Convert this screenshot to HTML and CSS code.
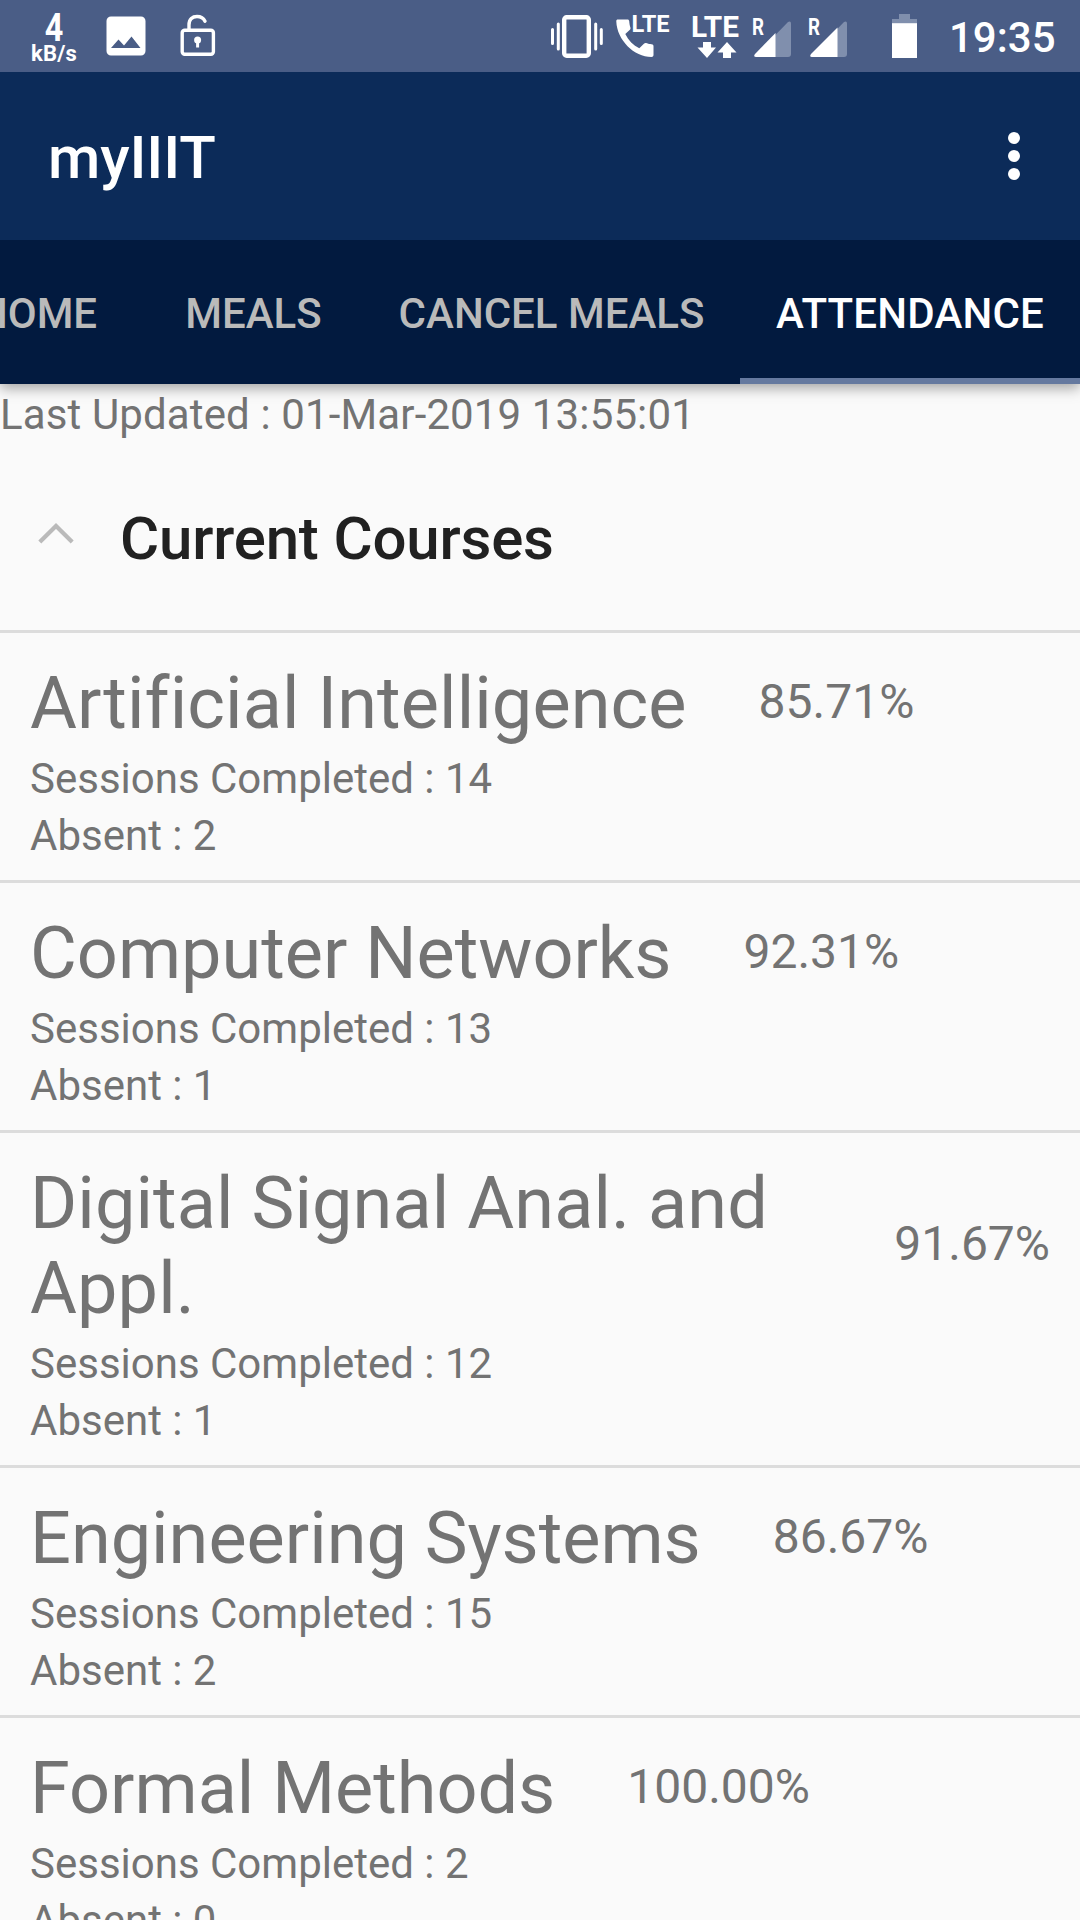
FILE: index.html
```html
<!DOCTYPE html>
<html lang="en">
<head>
<meta charset="utf-8">
<title>myIIIT</title>
<link rel="stylesheet" href="styles.css">
</head>
<body>
<div class="screen">
  <header class="status">
    <div class="speed"><span class="speed-value">4</span><span class="speed-unit">kB/s</span></div>
    <svg class="icon-photo" width="40" height="40" viewBox="0 0 40 40"><path fill="#fff" fill-rule="evenodd" d="M5 0.5H35a4.5 4.5 0 0 1 4.5 4.5V35a4.5 4.5 0 0 1-4.500 4.500H5a4.500 4.500 0 0 1-4.500-4.500V5A4.500 4.500 0 0 1 5 0.500ZM5 32H34.500L25.500 20.500 18 29.500 12.500 23.500Z"/></svg>
    <svg class="icon-lock" width="36" height="42" viewBox="0 0 36 42"><g fill="none" stroke="#fff" stroke-width="3.400" stroke-linecap="round"><rect x="2.200" y="16.200" width="31.200" height="24" rx="2.500"/><path d="M9 15V11C9 5 12.500 2.500 17 2.500c4 0 6.500 1.500 8 4.700"/></g><circle cx="17.600" cy="26" r="3.500" fill="#fff"/><path d="M17.600 26.500v7" stroke="#fff" stroke-width="3"/></svg>
    <svg class="icon-vibrate" width="54" height="44" viewBox="0 0 54 44"><g fill="none" stroke="#fff"><rect x="14.200" y="3.200" width="24.600" height="38.600" rx="2.500" stroke-width="4.400"/><path stroke-width="3" stroke-linecap="round" d="M2.500 15.500v14M8.300 10v25M45.700 10v25M51.300 15.500v14"/></g></svg>
    <svg class="icon-call" width="60" height="46" viewBox="0 0 60 46"><path fill="#fff" d="M3 5.500H12.500c1 0 1.500.6 1.700 1.500.2 2.500.5 4.500 1.200 6.500.3 1 .1 1.700-.5 2.300L10.300 20c3 6.500 8 11.200 14 14.300l4.600-4.600c.7-.7 1.500-.8 2.300-.6 2.300.8 3.500 1.200 5.300 1.200 1.500.1 2 .8 2 2v8.700c0 1.300-.8 2-2 2C19 43 2 26 1.300 7.500 1.200 6 1.800 5.500 3 5.500Z"/><text class="call-text" x="16.500" y="18" textLength="38" lengthAdjust="spacingAndGlyphs">LTE</text></svg>
    <svg class="icon-data" width="54" height="48" viewBox="0 0 54 48"><text class="data-text" x="1" y="23" textLength="48" lengthAdjust="spacingAndGlyphs">LTE</text><path fill="#fff" d="M13 28h8v5.500h5L17 44 7.500 33.500H13ZM37 28l9.500 10.500H41V44H33v-5.500H27.500Z"/></svg>
    <svg class="icon-signal" width="42" height="44" viewBox="0 0 42 44"><path fill="#808fad" d="M4 38 37 4q3-1.500 3 1.500V36q0 3-3 3H5q-3 0-1-1Z"/><path fill="#fff" d="M4 36 24.500 15V39H5q-3-.5-1-3Z"/><text class="roam-text" x="1" y="17" textLength="12" lengthAdjust="spacingAndGlyphs">R</text></svg>
    <svg class="icon-signal second" width="42" height="44" viewBox="0 0 42 44"><path fill="#808fad" d="M4 38 37 4q3-1.500 3 1.500V36q0 3-3 3H5q-3 0-1-1Z"/><path fill="#fff" d="M4 36 30.500 9.500V39H5q-3-.5-1-3Z"/><text class="roam-text" x="1" y="17" textLength="12" lengthAdjust="spacingAndGlyphs">R</text></svg>
    <svg class="icon-battery" width="25" height="44" viewBox="0 0 25 44"><path fill="#808fad" d="M7 0H18V5H25V10H0V5H7Z"/><path fill="#fff" d="M0 9.200H25V44H0Z"/></svg>
    <time class="clock">19:35</time>
  </header>
  <div class="toolbar">
    <h1 class="app-title">myIIIT</h1>
    <svg class="overflow" width="12" height="48" viewBox="0 0 12 48"><g fill="#fff"><circle cx="6" cy="6" r="6"/><circle cx="6" cy="24" r="6"/><circle cx="6" cy="42" r="6"/></g></svg>
  </div>
  <nav class="tabs">
    <span class="tab">HOME</span>
    <span class="tab">MEALS</span>
    <span class="tab tab-cancel">CANCEL MEALS</span>
    <span class="tab tab-active">ATTENDANCE</span>
  </nav>
  <main class="content">
    <p class="updated">Last Updated : 01-Mar-2019 13:55:01</p>
    <div class="group">
      <svg class="chevron" width="38" height="24" viewBox="0 0 38 24"><path fill="none" stroke="#bababa" stroke-width="4.200" d="M2.800 20 19 4 35.200 20"/></svg>
      <h2 class="group-title">Current Courses</h2>
    </div>
    <section class="course">
      <div class="course-head"><h3 class="name name-wide">Artificial Intelligence</h3><span class="percent">85.71%</span></div>
      <p class="detail">Sessions Completed : 14</p><p class="detail">Absent : 2</p>
    </section>
    <section class="course">
      <div class="course-head"><h3 class="name">Computer Networks</h3><span class="percent">92.31%</span></div>
      <p class="detail">Sessions Completed : 13</p><p class="detail">Absent : 1</p>
    </section>
    <section class="course">
      <div class="course-head"><h3 class="name name-wide">Digital Signal Anal. and Appl.</h3><span class="percent">91.67%</span></div>
      <p class="detail">Sessions Completed : 12</p><p class="detail">Absent : 1</p>
    </section>
    <section class="course">
      <div class="course-head"><h3 class="name">Engineering Systems</h3><span class="percent">86.67%</span></div>
      <p class="detail">Sessions Completed : 15</p><p class="detail">Absent : 2</p>
    </section>
    <section class="course">
      <div class="course-head"><h3 class="name">Formal Methods</h3><span class="percent">100.00%</span></div>
      <p class="detail">Sessions Completed : 2</p><p class="detail">Absent : 0</p>
    </section>
  </main>
</div>
</body>
</html>
```
FILE: styles.css
```css
* { box-sizing: border-box; margin: 0; padding: 0; }
body { font-family: Roboto, sans-serif; background: #fafafa; }
.screen { width: 1080px; height: 1920px; overflow: hidden; display: flex; flex-direction: column; }
svg { display: block; flex: none; overflow: visible; }

.status { flex: none; height: 72px; background: #4a5d86; color: #fff; display: flex; align-items: flex-start; padding-left: 32px; }
.speed { width: 44px; padding-top: 9px; display: flex; flex-direction: column; align-items: center; font-weight: 700; }
.speed-value { font-size: 38px; line-height: 38px; transform: scaleX(.85); }
.speed-unit { font-size: 22px; line-height: 14px; letter-spacing: .2px; }
.icon-photo { margin: 16px 0 0 30px; }
.icon-lock { margin: 14px 0 0 34px; }
.icon-vibrate { margin: 14px 0 0 334px; }
.icon-call { margin: 14px 0 0 11px; }
.icon-data { margin: 14px 0 0 15px; }
.icon-signal { margin: 18px 0 0 7px; }
.icon-signal.second { margin-left: 14px; }
.icon-battery { margin: 14px 0 0 43px; }
.clock { margin-left: 32px; font-size: 42px; line-height: 76px; font-weight: 500; }
.call-text, .data-text, .roam-text { font-family: Roboto, sans-serif; font-weight: 700; fill: #fff; }
.call-text { font-size: 23px; }
.data-text { font-size: 30px; }
.roam-text { font-size: 23px; }

.toolbar { flex: none; height: 168px; background: #0c2b59; color: #fff; display: flex; align-items: center; justify-content: space-between; padding: 0 60px 0 48px; }
.app-title { font-size: 60px; font-weight: 500; line-height: 70px; padding-top: 4px; letter-spacing: -.1px; }

.tabs { flex: none; height: 144px; background: #021a3f; color: #bababa; display: flex; justify-content: flex-end; font-size: 42px; font-weight: 500; line-height: 148px; white-space: nowrap; box-shadow: 0 4px 13px rgba(0,0,0,.36); z-index: 1; clip-path: inset(0 0 -30px); }
.tab { flex: none; width: 216px; padding-left: 3px; text-align: center; }
.tab-cancel { width: 380px; }
.tab-active { width: 340px; padding-left: 0; color: #fff; border-bottom: 6px solid #65799f; letter-spacing: .2px; }

.content { flex: 1; min-height: 0; color: #737373; }
.updated { font-size: 42px; line-height: 57px; height: 57px; padding-top: 2px; letter-spacing: .13px; }
.group { height: 189px; padding: 6px 0 0 37px; display: flex; align-items: center; gap: 45px; }
.chevron { margin-bottom: 9px; }
.group-title { font-size: 60px; font-weight: 500; line-height: 70px; color: #212121; letter-spacing: -.18px; }
.course { border-top: 3px solid #dcdcdc; padding: 28px 30px 16px; }
.course-head { display: flex; align-items: center; padding-bottom: 4px; }
.name { font-size: 72px; font-weight: 400; line-height: 85px; }
.name-wide { letter-spacing: .1px; }
.percent { flex: none; margin-left: 72px; font-size: 48px; line-height: 56px; padding-bottom: 4px; }
.detail { font-size: 42px; line-height: 57px; }
```
